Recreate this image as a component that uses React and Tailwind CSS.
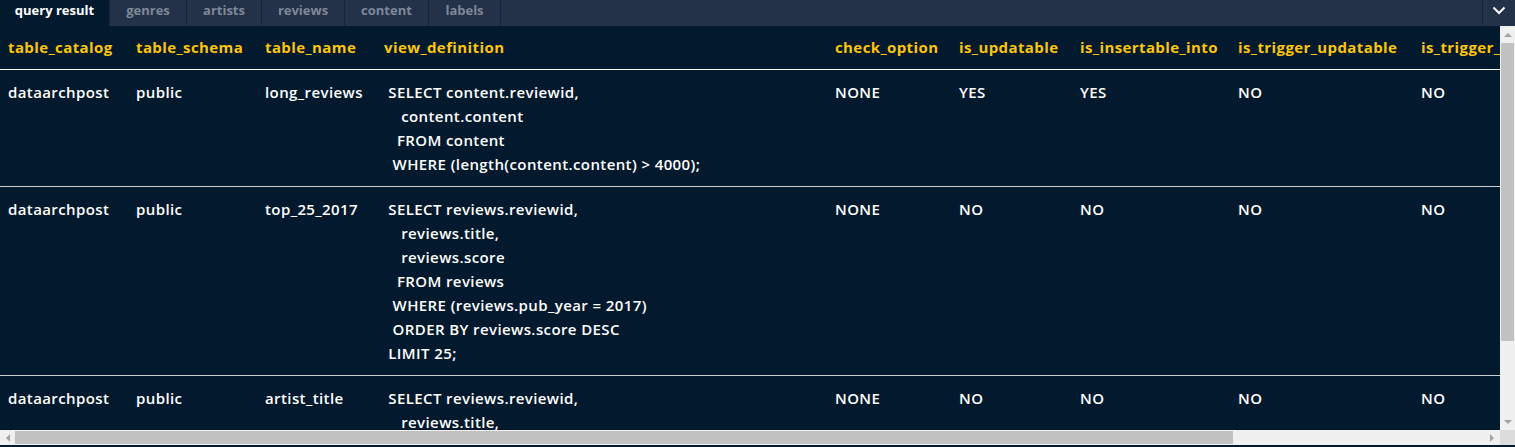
import React from 'react';

const tabs = ['query result', 'genres', 'artists', 'reviews', 'content', 'labels'];
const tabWidths = ['w-[110px]', 'w-[77px]', 'w-[75px]', 'w-[83px]', 'w-[84px]', 'w-[72px]'];

const columns = [
    { key: 'catalog', label: 'table_catalog', w: 'w-[128px]' },
    { key: 'schema', label: 'table_schema', w: 'w-[129px]' },
    { key: 'name', label: 'table_name', w: 'w-[119px]' },
    { key: 'def', label: 'view_definition', w: 'w-[451px]' },
    { key: 'check', label: 'check_option', w: 'w-[124px]' },
    { key: 'upd', label: 'is_updatable', w: 'w-[121px]' },
    { key: 'ins', label: 'is_insertable_into', w: 'w-[158px]' },
    { key: 'tupd', label: 'is_trigger_updatable', w: 'w-[183px]' },
    { key: 'tdel', label: 'is_trigger_deletable', w: 'w-[190px]' },
    { key: 'tins', label: 'is_trigger_insertable_into', w: 'w-[240px]' },
];

const rows = [
    {
        catalog: 'dataarchpost', schema: 'public', name: 'long_reviews',
        def: ' SELECT content.reviewid,\n    content.content\n   FROM content\n  WHERE (length(content.content) > 4000);',
        check: 'NONE', upd: 'YES', ins: 'YES', tupd: 'NO', tdel: 'NO', tins: 'NO',
    },
    {
        catalog: 'dataarchpost', schema: 'public', name: 'top_25_2017',
        def: ' SELECT reviews.reviewid,\n    reviews.title,\n    reviews.score\n   FROM reviews\n  WHERE (reviews.pub_year = 2017)\n  ORDER BY reviews.score DESC\n LIMIT 25;',
        check: 'NONE', upd: 'NO', ins: 'NO', tupd: 'NO', tdel: 'NO', tins: 'NO',
    },
    {
        catalog: 'dataarchpost', schema: 'public', name: 'artist_title',
        def: ' SELECT reviews.reviewid,\n    reviews.title,\n    artists.artist\n   FROM (reviews\n     JOIN artists ON ((reviews.reviewid = artists.reviewid)));',
        check: 'NONE', upd: 'NO', ins: 'NO', tupd: 'NO', tdel: 'NO', tins: 'NO',
    },
];

const Tri = ({ dir }) => {
    const pts = {
        up: '0,4 4,0 8,4',
        down: '0,0 8,0 4,4',
        left: '4,0 4,8 0,4',
        right: '0,0 4,4 0,8',
    }[dir];
    const vert = dir === 'up' || dir === 'down';
    return (
        <svg width={vert ? 8 : 4} height={vert ? 4 : 8} viewBox={vert ? '0 0 8 4' : '0 0 4 8'}>
            <polygon points={pts} fill="#a3a3a3" />
        </svg>
    );
};

const App = () => {
    return (
        <div className="w-[1515px] h-[447px] bg-[#03192d] overflow-hidden flex flex-col" style={{ fontFamily: '"Open Sans", sans-serif' }}>
            {/* Tab bar */}
            <div className="h-[26px] flex bg-[#233149] shrink-0">
                {tabs.map((t, i) => (
                    <div
                        key={t}
                        className={`${tabWidths[i]} h-full flex items-center justify-center pb-[4px] text-[13px] font-bold border-r border-[#16233a] ${i === 0 ? 'bg-[#03192d] text-white' : 'text-[#7f8897]'}`}
                    >
                        {t}
                    </div>
                ))}
                <div className="flex-1" />
                <div className="w-[33px] h-full border-l border-[#16233a] flex items-center justify-center pb-[6px]">
                    <svg width="14" height="9" viewBox="0 0 14 9" fill="none">
                        <path d="M1.5 1.5 L7 7 L12.5 1.5" stroke="white" strokeWidth="2" />
                    </svg>
                </div>
            </div>

            {/* Table + vertical scrollbar */}
            <div className="flex h-[404px] shrink-0">
                <div className="flex-1 overflow-hidden">
                    <table className="table-fixed border-collapse w-[1843px] text-[15px] tracking-[0.4px]">
                        <colgroup>
                            {columns.map(c => <col key={c.key} className={c.w} />)}
                        </colgroup>
                        <thead>
                            <tr className="border-b border-white">
                                {columns.map(c => (
                                    <th key={c.key} className="text-left font-bold text-[#fcc50c] leading-[24px] pl-2 pt-[9px] pb-[10px] whitespace-nowrap align-top">
                                        {c.label}
                                    </th>
                                ))}
                            </tr>
                        </thead>
                        <tbody>
                            {rows.map((r, i) => (
                                <tr key={i} className="border-b border-[#cfcfcf]">
                                    {columns.map(c => (
                                        <td
                                            key={c.key}
                                            className={`pl-2 pt-[10px] pb-[10px] align-top text-white font-semibold leading-[24px] ${c.key === 'def' ? 'whitespace-pre' : 'whitespace-nowrap'}`}
                                        >
                                            {r[c.key]}
                                        </td>
                                    ))}
                                </tr>
                            ))}
                        </tbody>
                    </table>
                </div>
                {/* vertical scrollbar */}
                <div className="w-[15px] bg-[#f0f0f0] flex flex-col items-center">
                    <div className="h-[17px] flex items-center justify-center"><Tri dir="up" /></div>
                    <div className="w-[13px] h-[298px] bg-[#c1c1c1]" />
                    <div className="flex-1" />
                    <div className="h-[17px] flex items-center justify-center"><Tri dir="down" /></div>
                </div>
            </div>

            {/* horizontal scrollbar */}
            <div className="h-[15px] flex shrink-0">
                <div className="flex-1 bg-[#f0f0f0] flex items-center">
                    <div className="w-[15px] flex justify-center"><Tri dir="left" /></div>
                    <div className="w-[1218px] h-[13px] bg-[#c1c1c1]" />
                    <div className="flex-1" />
                    <div className="w-[17px] flex justify-center"><Tri dir="right" /></div>
                </div>
                <div className="w-[15px] bg-[#dcdcdc]" />
            </div>
        </div>
    );
};

export default App;
